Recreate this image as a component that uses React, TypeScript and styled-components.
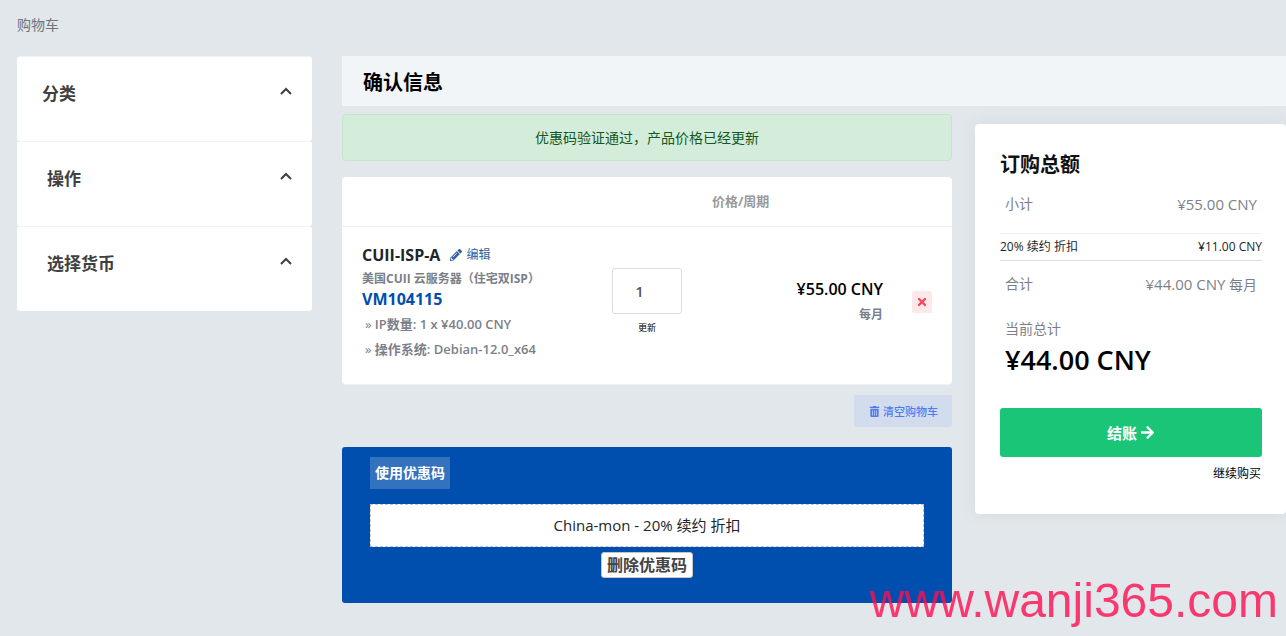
import React from 'react';
import styled, { createGlobalStyle } from 'styled-components';
import { FaArrowRight, FaPencilAlt, FaTimes, FaTrashAlt } from 'react-icons/fa';

const GlobalStyle = createGlobalStyle`
  *, *::before, *::after { box-sizing: border-box; }
  body {
    margin: 0;
    min-height: 100vh;
    background: #e2e7eb;
    color: #212529;
    font-family: 'Open Sans', 'Noto Sans CJK SC', sans-serif;
    font-size: 14px;
    line-height: 20px;
  }
  button, input { font-family: inherit; }
  h1, h2, h3, p, ul { margin: 0; padding: 0; }
  a { text-decoration: none; }
`;

const Page = styled.div`
  padding: 15px 0 33px 17px;
`;

const Breadcrumb = styled.nav`
  height: 41px;
  color: #6c757d;
`;

const Columns = styled.div`
  display: flex;
  align-items: flex-start;
  gap: 30px;
`;

const Sidebar = styled.aside`
  flex: 0 0 295px;
`;

const Panel = styled.button<{ $indent: number }>`
  display: flex;
  justify-content: space-between;
  align-items: flex-start;
  width: 100%;
  height: 85px;
  padding: 24px 20px 0 ${(p) => p.$indent}px;
  border: 0;
  border-top: 1px solid #f0f3f5;
  border-radius: 3px;
  background: #fff;
  color: #404040;
  font-size: 17px;
  font-weight: 700;
  line-height: 26px;
  cursor: pointer;
`;

const Chevron = styled.svg`
  width: 12px;
  height: 8px;
  margin-top: 6px;
`;

const Main = styled.main`
  flex: 1;
  min-width: 0;
`;

const Heading = styled.h1`
  padding: 12px 21px 8px;
  background: #f1f5f8;
  color: #000;
  font-size: 20px;
  line-height: 30px;
`;

const Content = styled.div`
  display: flex;
  align-items: flex-start;
  gap: 23px;
  padding-top: 8px;
`;

const Cart = styled.div`
  flex: 1;
  min-width: 0;
  display: flex;
  flex-direction: column;
`;

const Alert = styled.div`
  padding: 13px 20px 12px;
  margin-bottom: 16px;
  border: 1px solid #c3e6cb;
  border-radius: 4px;
  background: #d4edda;
  color: #155724;
  text-align: center;
`;

const Table = styled.table`
  width: 100%;
  table-layout: fixed;
  border-collapse: separate;
  border-spacing: 0;
  border-radius: 4px;
  background: #fff;
  box-shadow: 0 1px 0 #f0f3f5;
`;

const Th = styled.th`
  height: 50px;
  padding: 0 20px 2px;
  border-bottom: 1px solid #eceeef;
  color: #999;
  font-size: 13px;
  text-align: left;
`;

const Td = styled.td<{ $align?: string }>`
  padding: 15px 0 22px;
  text-align: ${(p) => p.$align || 'left'};
  vertical-align: middle;
`;

const NameCell = styled(Td)`
  padding-left: 20px;
  color: #7c7f88;
  font-size: 12px;
  font-weight: 700;
  white-space: nowrap;
`;

const ProductLine = styled.div`
  display: flex;
  align-items: center;
  gap: 10px;
  height: 25px;
  margin-bottom: 2px;
`;

const ProductName = styled.strong`
  color: #212529;
  font-size: 16px;
  font-weight: 700;
`;

const EditLink = styled.a`
  display: flex;
  align-items: center;
  gap: 4px;
  color: #33619c;
  font-weight: 400;
`;

const Host = styled.div`
  color: #004fae;
  font-size: 16px;
  font-weight: 700;
`;

const Options = styled.ul`
  padding: 3px 0 0 3px;
  list-style: none;
  font-size: 13px;
  font-weight: 600;
  line-height: 25px;
`;

const Marker = styled.span`
  font-weight: 400;
`;

const Quantity = styled.input`
  display: block;
  width: 70px;
  height: 46px;
  margin: 0 auto;
  padding: 0 15px 0 0;
  border: 1px solid #ddd;
  border-radius: 3px;
  background: #fff;
  color: #555;
  font-size: 15px;
  font-weight: 600;
  text-align: center;
`;

const UpdateButton = styled.button`
  padding: 0;
  margin-top: 5px;
  border: 0;
  background: none;
  color: #000;
  font-size: 9px;
  line-height: 18px;
`;

const PriceCell = styled(Td)`
  padding-right: 9px;
  color: #7c7f88;
  font-size: 12px;
  font-weight: 600;
  line-height: 25px;
`;

const Price = styled.strong`
  display: block;
  color: #000;
  font-size: 16px;
  font-weight: 600;
`;

const RemoveButton = styled.button`
  display: inline-flex;
  align-items: center;
  justify-content: center;
  width: 20px;
  height: 22px;
  padding: 0;
  border: 0;
  border-radius: 2px;
  background: #ffe8ea;
  color: #f9455c;
`;

const EmptyButton = styled.button`
  display: flex;
  align-items: center;
  align-self: flex-end;
  gap: 3px;
  height: 32px;
  margin: 11px 0 20px;
  padding: 0 14px 0 15px;
  border: 0;
  border-radius: 0 0 3px 3px;
  background: #d3dced;
  color: #4c7cf0;
  font-size: 11px;
  font-weight: 500;
`;

const Promo = styled.section`
  display: flex;
  flex-direction: column;
  align-items: center;
  padding: 10px 28px 25px;
  border-radius: 3px;
  background: #004fae;
`;

const PromoTitle = styled.h2`
  align-self: flex-start;
  padding: 6px 5px;
  margin-bottom: 15px;
  background: #3372be;
  color: #fff;
  font-size: 14px;
`;

const PromoCode = styled.div`
  width: 100%;
  padding: 10px;
  margin-bottom: 5px;
  border: 1px dashed #c5c5c5;
  background: #fff;
  font-size: 15px;
  line-height: 21px;
  text-align: center;
`;

const PromoRemove = styled.button`
  height: 26px;
  padding: 0 5px;
  border: 1px solid #c5c5c5;
  border-radius: 3px;
  background: #fff;
  color: #444;
  font-size: 16px;
  font-weight: 600;
  line-height: 24px;
`;

const Summary = styled.aside`
  flex: 0 0 311px;
  margin-top: 10px;
  padding: 26px 24px 30px 25px;
  border-radius: 4px;
  background: #fff;
  box-shadow: 0 0 20px rgba(0, 20, 60, 0.06);
`;

const SummaryTitle = styled.h2`
  color: #111;
  font-size: 20px;
  line-height: 30px;
`;

const Row = styled.div`
  display: flex;
  justify-content: space-between;
  padding: 13px 5px 14px;
  color: #7c7f88;
`;

const FirstRow = styled(Row)`
  padding-bottom: 19px;
  padding-top: 14px;
`;

const Amount = styled.span`
  font-size: 15px;
`;

const DiscountRow = styled.div`
  display: flex;
  justify-content: space-between;
  padding: 3px 0;
  border-top: 1px solid #eceeef;
  border-bottom: 1px solid #dcdfe0;
  font-size: 12px;
`;

const Total = styled.div`
  padding: 10px 5px 27px;
  color: #7c7f88;
`;

const TotalAmount = styled.strong`
  display: block;
  color: #000;
  font-size: 27px;
  font-weight: 600;
  line-height: 42px;
`;

const CheckoutButton = styled.button`
  display: flex;
  align-items: center;
  justify-content: center;
  gap: 3px;
  width: 100%;
  height: 49px;
  border: 0;
  border-radius: 3px;
  background: #1bc578;
  color: #fff;
  font-size: 15px;
  font-weight: 700;
`;

const ContinueLink = styled.a`
  display: block;
  padding: 7px 1px 0;
  color: #000;
  font-size: 12px;
  text-align: right;
`;

const Watermark = styled.div`
  position: fixed;
  right: 8px;
  bottom: 11px;
  color: rgba(255, 12, 80, 0.8);
  font-family: 'Liberation Sans', Arial, sans-serif;
  font-size: 48px;
  line-height: 48px;
  pointer-events: none;
`;

const panels = [
  { title: '分类', indent: 25 },
  { title: '操作', indent: 30 },
  { title: '选择货币', indent: 30 },
];

const options = ['IP数量: 1 x ¥40.00 CNY', '操作系统: Debian-12.0_x64'];

export default function App() {
  return (
    <>
      <GlobalStyle />
      <Page>
        <Breadcrumb>购物车</Breadcrumb>
        <Columns>
          <Sidebar>
            {panels.map((panel) => (
              <Panel key={panel.title} type="button" $indent={panel.indent}>
                {panel.title}
                <Chevron viewBox="0 0 12 8" fill="none" stroke="currentColor" strokeWidth="2">
                  <path d="M1 7 6 2l5 5" />
                </Chevron>
              </Panel>
            ))}
          </Sidebar>
          <Main>
            <Heading>确认信息</Heading>
            <Content>
              <Cart>
                <Alert role="status">优惠码验证通过，产品价格已经更新</Alert>
                <Table>
                  <colgroup>
                    <col />
                    <col width="90" />
                    <col width="200" />
                    <col width="60" />
                  </colgroup>
                  <thead>
                    <tr>
                      <Th />
                      <Th />
                      <Th>价格/周期</Th>
                      <Th />
                    </tr>
                  </thead>
                  <tbody>
                    <tr>
                      <NameCell>
                        <ProductLine>
                          <ProductName>CUII-ISP-A</ProductName>
                          <EditLink href="#edit">
                            <FaPencilAlt size={12} />
                            编辑
                          </EditLink>
                        </ProductLine>
                        <div>美国CUII 云服务器（住宅双ISP）</div>
                        <Host>VM104115</Host>
                        <Options>
                          {options.map((option) => (
                            <li key={option}>
                              <Marker>»</Marker> {option}
                            </li>
                          ))}
                        </Options>
                      </NameCell>
                      <Td $align="center">
                        <Quantity type="text" defaultValue="1" aria-label="数量" />
                        <UpdateButton type="button">更新</UpdateButton>
                      </Td>
                      <PriceCell $align="right">
                        <Price>¥55.00 CNY</Price>
                        每月
                      </PriceCell>
                      <Td $align="center">
                        <RemoveButton type="button" aria-label="删除">
                          <FaTimes size={12} />
                        </RemoveButton>
                      </Td>
                    </tr>
                  </tbody>
                </Table>
                <EmptyButton type="button">
                  <FaTrashAlt size={11} />
                  清空购物车
                </EmptyButton>
                <Promo>
                  <PromoTitle>使用优惠码</PromoTitle>
                  <PromoCode>China-mon - 20% 续约 折扣</PromoCode>
                  <PromoRemove type="button">删除优惠码</PromoRemove>
                </Promo>
              </Cart>
              <Summary>
                <SummaryTitle>订购总额</SummaryTitle>
                <FirstRow>
                  <span>小计</span>
                  <Amount>¥55.00 CNY</Amount>
                </FirstRow>
                <DiscountRow>
                  <span>20% 续约 折扣</span>
                  <span>¥11.00 CNY</span>
                </DiscountRow>
                <Row>
                  <span>合计</span>
                  <span>
                    <Amount>¥44.00 CNY</Amount> 每月
                  </span>
                </Row>
                <Total>
                  当前总计
                  <TotalAmount>¥44.00 CNY</TotalAmount>
                </Total>
                <CheckoutButton type="button">
                  结账
                  <FaArrowRight size={15} />
                </CheckoutButton>
                <ContinueLink href="#continue">继续购买</ContinueLink>
              </Summary>
            </Content>
          </Main>
        </Columns>
      </Page>
      <Watermark>www.wanji365.com</Watermark>
    </>
  );
}
